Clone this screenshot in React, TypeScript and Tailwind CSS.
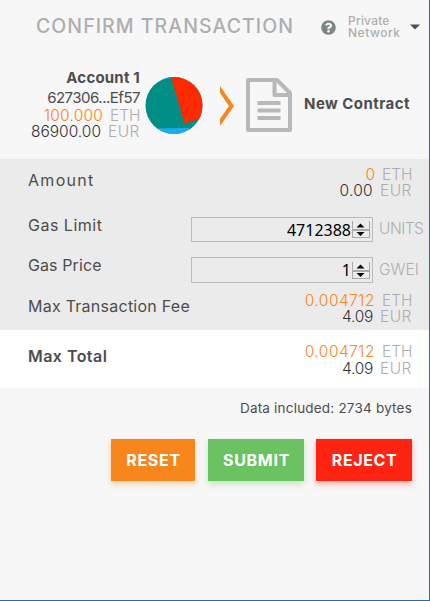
import React from "react";

type AmountProps = {
  eth: string;
  eur: string;
  ethClass?: string;
  eurClass?: string;
  gap?: string;
};

function Amounts({ eth, eur, ethClass = "", eurClass = "", gap = "" }: AmountProps) {
  return (
    <div className="flex flex-col items-end text-[15.5px] leading-[16px] whitespace-nowrap">
      <div className="flex font-light">
        <span className={`text-[#f7861c] ${ethClass}`}>{eth}</span>
        <span className="ml-[7px] w-[30px] text-[#aeaeae]">ETH</span>
      </div>
      <div className={`flex font-light ${gap}`}>
        <span className={`text-[#333] ${eurClass}`}>{eur}</span>
        <span className="ml-[7px] w-[32px] tracking-[0.4px] text-[#aeaeae]">EUR</span>
      </div>
    </div>
  );
}

function NumberBox({ value, height }: { value: string; height: string }) {
  return (
    <div className={`flex w-[182px] items-center justify-end border border-[#bbb] pr-[2px] ${height}`}>
      <span className="font-['Noto_Sans','Liberation_Sans',sans-serif] text-[16px] leading-[20px] text-black">{value}</span>
      <svg className="ml-px" width="18" height="17" viewBox="0 0 18 17">
        <path d="M.5 0V16.5H17.5V0" fill="#ececec" stroke="#aaa" shapeRendering="crispEdges" />
        <path d="M0 9h18" stroke="#aaa" strokeWidth="2" shapeRendering="crispEdges" />
        <path d="M8.500 2.500l4 4H4.500zM8.500 15l4-4H4.500z" fill="#000" />
      </svg>
    </div>
  );
}

export default function App() {
  return (
    <div className="flex h-[601px] w-[430px] flex-col overflow-hidden border-r border-b border-[#1a70b5] bg-[#f7f7f7] font-['Inter','Liberation_Sans',sans-serif] text-[#4d4d4d]">
      <header className="flex h-[54px] shrink-0 items-center pl-[36px]">
        <h1 className="w-[285px] whitespace-nowrap text-[19.5px] font-medium tracking-[1.05px] text-[#aeaeae]">CONFIRM TRANSACTION</h1>
        <svg width="15" height="15" viewBox="0 0 512 512" fill="#7f8484">
          <path d="M504 256c0 137-111 248-248 248S8 393 8 256 119 8 256 8s248 111 248 248zM262.700 90c-54.500 0-89.300 23-116.500 63.800-3.500 5.300-2.400 12.400 2.700 16.300l34.700 26.300c5.200 3.900 12.600 3 16.700-2.100 17.900-22.700 30.100-35.800 57.300-35.800 20.400 0 45.700 13.100 45.700 33 0 15-12.400 22.700-32.500 34C247.100 238.500 216 254.900 216 296v4c0 6.600 5.400 12 12 12h56c6.600 0 12-5.400 12-12v-1.300c0-28.500 83.200-29.600 83.200-106.700 0-58-60.200-102-116.500-102zM256 338c-25.400 0-46 20.600-46 46s20.600 46 46 46 46-20.600 46-46-20.600-46-46-46z" />
        </svg>
        <div className="ml-[12px] w-[62px] text-[12px] leading-[12px] font-medium text-[#aeaeae]">
          <div className="tracking-[0.2px]">Private</div>
          <div className="tracking-[0.5px]">Network</div>
        </div>
        <svg width="10" height="6" viewBox="0 0 10 6"><path d="M0 .5h10L5 5.500z" fill="#4d4d4d" /></svg>
      </header>

      <section className="flex h-[105px] shrink-0 pt-[15px] whitespace-nowrap">
        <div className="flex w-[140px] flex-col items-end">
          <div className="text-[15px] leading-[18px] font-bold tracking-[0.2px]">Account 1</div>
          <div className="mt-[2px] mb-[1px] text-[15px] leading-[18px] font-normal tracking-[-0.5px]">627306...Ef57</div>
          <Amounts eth="100.000" eur="86900.00" ethClass="tracking-[0.2px]" />
        </div>
        <svg className="mt-[8px] ml-[5px]" width="58" height="58" viewBox="0 0 58 58">
          <clipPath id="avatar"><circle cx="29" cy="28.500" r="28.500" /></clipPath>
          <g clipPath="url(#avatar)">
            <rect width="58" height="58" fill="#018e85" />
            <path d="M26 0L39.500 46.500L58 41V0z" fill="#fb2a01" />
            <path d="M15 0H26L26.500 1L14 4z" fill="#2386e0" />
            <path d="M0 51.500L44 51V58H0z" fill="#1bacf0" />
          </g>
        </svg>
        <svg className="mt-[17px] ml-[17px]" width="14" height="40" viewBox="0 0 14 40">
          <path d="M0 0L14 20L0 40V33L9 20L0 7z" fill="#f7861c" />
        </svg>
        <svg className="mt-[9px] ml-[12px]" width="46" height="54" viewBox="0 0 46 54" fill="none" stroke="#b8b8b8" strokeWidth="4" strokeLinejoin="round">
          <path d="M2 2H31L44 15V52H2z" />
          <path d="M28.500 2V17H44M11.500 25H34.500M11.500 32.500H34.500M11.500 40H34.500" />
        </svg>
        <div className="mt-[26px] ml-[12px] text-[15px] leading-[18px] font-bold tracking-[0.45px]">New Contract</div>
      </section>

      <section className="flex h-[171px] shrink-0 flex-col bg-[#ebebeb] pl-[28px] text-[15.5px] whitespace-nowrap">
        <div className="flex h-[58px] justify-between pt-[8px] pr-[17px]">
          <div className="pt-[4px] text-[16px] leading-[18px] tracking-[1.3px]">Amount</div>
          <Amounts eth="0" eur="0.00" eurClass="tracking-[0.3px]" />
        </div>
        <div className="flex h-[40px]">
          <div className="w-[163px] text-[16px] leading-[16px] tracking-[0.5px]">Gas Limit</div>
          <NumberBox value="4712388" height="h-[25px]" />
          <div className="ml-[6px] pt-[3px] leading-[18px] font-light tracking-[-0.5px] text-[#aeaeae]">UNITS</div>
        </div>
        <div className="flex h-[35px]">
          <div className="w-[163px] text-[16px] leading-[16px] tracking-[0.1px]">Gas Price</div>
          <NumberBox value="1" height="h-[26px]" />
          <div className="ml-[6px] pt-[4px] leading-[18px] font-light text-[#aeaeae]">GWEI</div>
        </div>
        <div className="flex justify-between pt-px pr-[17px]">
          <div className="pt-[4px] text-[16px] leading-[18px] tracking-[0.25px]">Max Transaction Fee</div>
          <Amounts eth="0.004712" eur="4.09" ethClass="tracking-[0.5px]" eurClass="tracking-[-0.3px]" />
        </div>
      </section>

      <section className="flex h-[58px] shrink-0 justify-between bg-white pt-[14px] pr-[17px] pl-[28px] text-[15.5px] whitespace-nowrap">
        <div className="pt-[3px] text-[16px] leading-[18px] font-semibold tracking-[0.45px]">Max Total</div>
        <Amounts eth="0.004712" eur="4.09" gap="mt-px" ethClass="tracking-[0.5px]" eurClass="tracking-[-0.3px]" />
      </section>

      <div className="h-[51px] shrink-0 pt-[12px] pr-[17px] text-right text-[13.5px] leading-[16px] tracking-[0.2px]">Data included: 2734 bytes</div>

      <div className="flex h-[42px] shrink-0 justify-end pr-[17px] text-[16px] font-bold text-white">
        <button className="w-[84px] bg-[#f7861c] pl-px tracking-[0.7px] shadow-[0_3px_6px_rgba(247,134,28,0.36)]">RESET</button>
        <button className="ml-[13px] w-[96px] bg-[#6ac360] pl-px tracking-[0.7px] shadow-[0_3px_6px_rgba(106,195,96,0.36)]">SUBMIT</button>
        <button className="ml-[12px] w-[96px] bg-[#ff2312] pl-px tracking-[0.6px] shadow-[0_3px_6px_rgba(255,35,18,0.36)]">REJECT</button>
      </div>
    </div>
  );
}
